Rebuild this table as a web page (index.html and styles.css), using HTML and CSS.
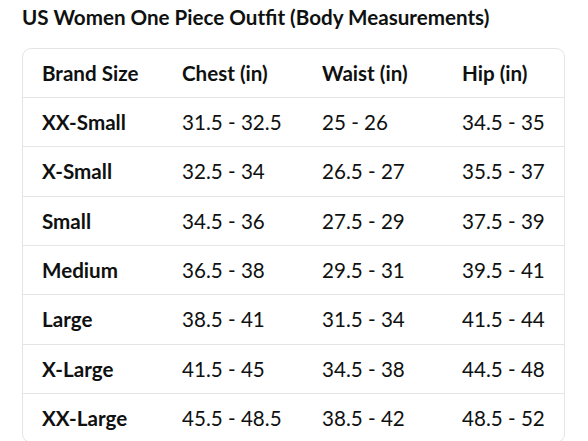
FILE: index.html
```html
<!DOCTYPE html>
<html lang="en">
<head>
<meta charset="utf-8">
<title>US Women One Piece Outfit (Body Measurements)</title>
<link rel="stylesheet" href="styles.css">
</head>
<body>
<h1 class="title">US Women One Piece Outfit (Body Measurements)</h1>
<div class="chart">
  <div class="row head">
    <div class="cell">Brand Size</div>
    <div class="cell">Chest (in)</div>
    <div class="cell">Waist (in)</div>
    <div class="cell">Hip (in)</div>
  </div>
  <div class="row">
    <div class="cell size">XX-Small</div>
    <div class="cell">31.5 - 32.5</div>
    <div class="cell">25 - 26</div>
    <div class="cell">34.5 - 35</div>
  </div>
  <div class="row">
    <div class="cell size">X-Small</div>
    <div class="cell">32.5 - 34</div>
    <div class="cell">26.5 - 27</div>
    <div class="cell">35.5 - 37</div>
  </div>
  <div class="row">
    <div class="cell size">Small</div>
    <div class="cell">34.5 - 36</div>
    <div class="cell">27.5 - 29</div>
    <div class="cell">37.5 - 39</div>
  </div>
  <div class="row">
    <div class="cell size">Medium</div>
    <div class="cell">36.5 - 38</div>
    <div class="cell">29.5 - 31</div>
    <div class="cell">39.5 - 41</div>
  </div>
  <div class="row">
    <div class="cell size">Large</div>
    <div class="cell">38.5 - 41</div>
    <div class="cell">31.5 - 34</div>
    <div class="cell">41.5 - 44</div>
  </div>
  <div class="row">
    <div class="cell size">X-Large</div>
    <div class="cell">41.5 - 45</div>
    <div class="cell">34.5 - 38</div>
    <div class="cell">44.5 - 48</div>
  </div>
  <div class="row">
    <div class="cell size">XX-Large</div>
    <div class="cell">45.5 - 48.5</div>
    <div class="cell">38.5 - 42</div>
    <div class="cell">48.5 - 52</div>
  </div>
</div>
</body>
</html>
```
FILE: styles.css
```css
html, body {
  margin: 0;
  padding: 0;
  background: #ffffff;
}
body {
  font-family: Lato, "Liberation Sans", sans-serif;
  color: #0f1111;
  padding: 0 23px 0 22px;
}
.title {
  font-size: 20.6px;
  font-weight: 700;
  line-height: 24px;
  margin: 0;
  padding-top: 5px;
  height: 48px;
  box-sizing: border-box;
  white-space: nowrap;
}
.chart {
  border: 1px solid #e3e6e6;
  border-radius: 9px;
  overflow: hidden;
}
.row {
  display: grid;
  grid-template-columns: 159px 140px 140px 1fr;
  height: 48.33px;
  align-items: center;
  border-top: 1px solid #e3e6e6;
  font-size: 20.6px;
}
.row.head {
  border-top: none;
  height: 48px;
  font-weight: 700;
}
.cell:first-child {
  padding-left: 19px;
}
.size {
  font-weight: 700;
}
```
